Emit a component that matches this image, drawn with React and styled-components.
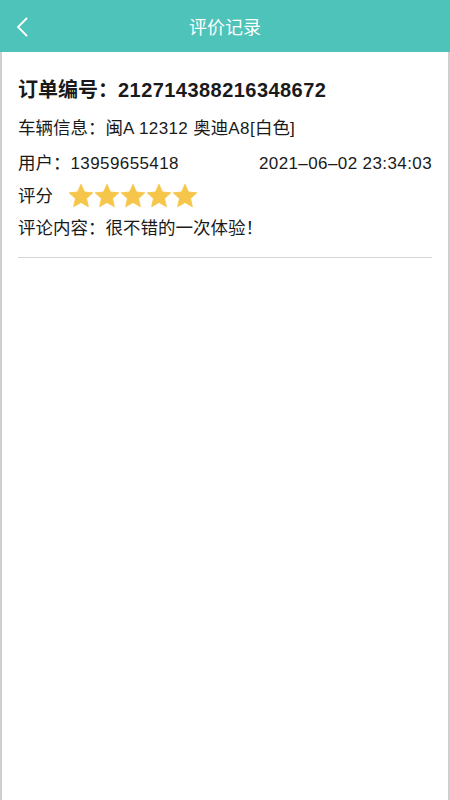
import styled, { createGlobalStyle } from "styled-components";

const GlobalStyle = createGlobalStyle`
  html, body {
    margin: 0;
    padding: 0;
    background: #fff;
    font-family: "Liberation Sans", "Noto Sans CJK SC", sans-serif;
  }
`;

const Page = styled.div`
  width: 450px;
  height: 800px;
  display: flex;
  flex-direction: column;
  box-sizing: border-box;
`;

const Header = styled.div`
  height: 52px;
  background: #4ec3ba;
  display: flex;
  align-items: center;
  justify-content: center;
  position: relative;
  color: #fff;
  font-size: 18px;
`;

const BackBtn = styled.div`
  position: absolute;
  left: 14px;
  top: 15px;
  width: 20px;
  height: 24px;
`;

const Body = styled.div`
  flex: 1;
  border-left: 2px solid #cfcfcf;
  border-right: 2px solid #cfcfcf;
  padding: 24px 16px 0 16px;
`;

const Card = styled.div`
  border-bottom: 1px solid #d6d6d6;
  padding-bottom: 18px;
  color: #1a1a1a;
`;

const Title = styled.div`
  font-size: 20px;
  font-weight: bold;
  line-height: 28px;
  margin-bottom: 13px;
`;

const Row = styled.div`
  display: flex;
  align-items: center;
  justify-content: ${(p) => (p.spread ? "space-between" : "flex-start")};
  font-size: 17.5px;
  line-height: 22px;
  margin-bottom: ${(p) => p.gap ?? 12}px;
`;

const Latin = styled.span`
  font-size: ${(p) => p.size || 17}px;
  letter-spacing: ${(p) => p.track ?? 0.4}px;
`;

const Stars = styled.div`
  display: flex;
  margin-left: 15px;
`;

const Star = () => (
  <svg width="26" height="26" viewBox="0 0 24 24">
    <path
      d="M12 1.2l3.2 7.1 7.7.8-5.8 5.2 1.7 7.6L12 18l-6.8 3.9 1.7-7.6-5.8-5.2 7.7-.8z"
      fill="#f6c64a"
      stroke="#f6c64a"
      strokeWidth="0.8"
      strokeLinejoin="round"
    />
  </svg>
);

export default function App() {
  return (
    <Page>
      <GlobalStyle />
      <Header>
        <BackBtn>
          <svg width="20" height="24" viewBox="0 0 20 24">
            <path d="M13 3L4 12l9 9" fill="none" stroke="#fff" strokeWidth="1.8" />
          </svg>
        </BackBtn>
        评价记录
      </Header>
      <Body>
        <Card>
          <Title>
            订单编号：
            <Latin size={20} track={0.45}>
              212714388216348672
            </Latin>
          </Title>
          <Row>
            <span>
              车辆信息：闽<Latin>A 12312 </Latin>奥迪<Latin>A8[</Latin>白色
              <Latin>]</Latin>
            </span>
          </Row>
          <Row spread gap={8}>
            <span>
              用户：<Latin>13959655418</Latin>
            </span>
            <Latin>2021–06–02 23:34:03</Latin>
          </Row>
          <Row gap={8}>
            <span>评分</span>
            <Stars>
              {[0, 1, 2, 3, 4].map((i) => (
                <Star key={i} />
              ))}
            </Stars>
          </Row>
          <Row gap={0}>
            <span>评论内容：很不错的一次体验！</span>
          </Row>
        </Card>
      </Body>
    </Page>
  );
}
